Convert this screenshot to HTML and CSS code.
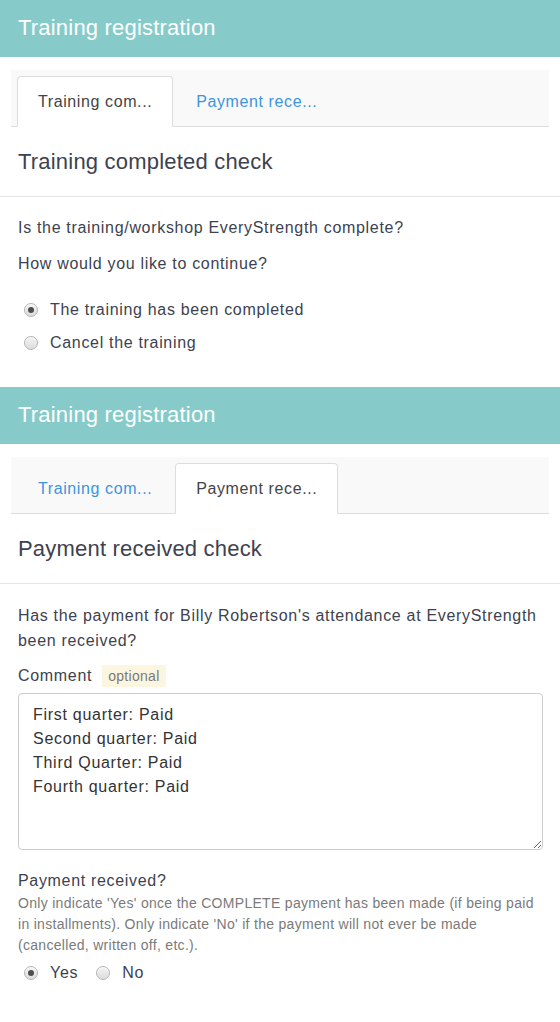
FILE: index.html
```html
<!DOCTYPE html>
<html>
<head>
<meta charset="utf-8">
<link rel="stylesheet" href="styles.css">
</head>
<body>
<section class="panel">
  <header class="bar"><h1 class="bar-title">Training registration</h1></header>
  <nav class="tabs">
    <span class="tab active">Training com...</span>
    <span class="tab link">Payment rece...</span>
  </nav>
  <h2 class="check-title">Training completed check</h2>
  <div class="body">
    <p class="q">Is the training/workshop EveryStrength complete?</p>
    <p class="q q2">How would you like to continue?</p>
    <div class="options">
      <label class="opt"><input type="radio" name="a" checked><span>The training has been completed</span></label>
      <label class="opt"><input type="radio" name="a"><span>Cancel the training</span></label>
    </div>
  </div>
</section>
<section class="panel second">
  <header class="bar"><h1 class="bar-title">Training registration</h1></header>
  <nav class="tabs">
    <span class="tab link">Training com...</span>
    <span class="tab active">Payment rece...</span>
  </nav>
  <h2 class="check-title">Payment received check</h2>
  <div class="body">
    <p class="q long">Has the payment for Billy Robertson's attendance at EveryStrength been received?</p>
    <div class="field-label">Comment <span class="badge">optional</span></div>
    <textarea class="comment">First quarter: Paid
Second quarter: Paid
Third Quarter: Paid
Fourth quarter: Paid</textarea>
    <div class="field-label pr">Payment received?</div>
    <p class="help">Only indicate 'Yes' once the COMPLETE payment has been made (if being paid in installments). Only indicate 'No' if the payment will not ever be made (cancelled, written off, etc.).</p>
    <div class="inline-opts">
      <label class="opt"><input type="radio" name="b" checked><span>Yes</span></label>
      <label class="opt"><input type="radio" name="b"><span>No</span></label>
    </div>
  </div>
</section>
</body>
</html>
```

FILE: styles.css
```css
* { box-sizing: border-box; }
html, body { margin: 0; padding: 0; background: #fff; }
body {
  font-family: "Liberation Sans", Arial, sans-serif;
  color: #3d4250;
  font-size: 16px;
  letter-spacing: 0.68px;
  width: 560px;
}
.panel { padding-bottom: 32px; }
.panel.second { padding-bottom: 0; }
.bar {
  background: #86cbca;
  height: 57px;
  display: flex;
  align-items: center;
  padding: 0 18px;
}
.bar-title {
  margin: 0;
  color: #fff;
  font-weight: normal;
  font-size: 22px;
  letter-spacing: 0.2px;
  line-height: 28px;
  position: relative;
  top: -1px;
}
.tabs {
  margin: 13px 11px 0;
  background: #f9f9f9;
  padding: 6px 6px 0;
  border-bottom: 1px solid #dddddd;
  display: flex;
  height: 57px;
}
.tab {
  display: block;
  padding: 0 20px;
  height: 51px;
  line-height: 50px;
  font-size: 16px;
  letter-spacing: 0.6px;
  border: 1px solid transparent;
  border-radius: 4px 4px 0 0;
  margin-right: 2px;
  margin-bottom: -1px;
}
.tab.active {
  background: #fff;
  border-color: #dddddd;
  border-bottom-color: #fff;
  color: #444;
}
.tab.link { color: #3c95de; }
.check-title {
  margin: 0;
  font-weight: normal;
  font-size: 22px;
  letter-spacing: 0.2px;
  line-height: 30px;
  padding: 20px 18px 19px;
  color: #3d4250;
  border-bottom: 1px solid #e5e5e5;
}
.body { padding: 0 18px; }
.q { margin: 19px 0 0; line-height: 24px; }
.q2 { margin-top: 12px; }
.q.long { margin-top: 19px; line-height: 25px; }
.options {
  margin-top: 22px;
  display: flex;
  flex-direction: column;
  gap: 9px;
  padding-left: 6px;
}
.opt {
  display: flex;
  align-items: center;
  line-height: 24px;
  font-size: 16px;
}
.opt input {
  appearance: none;
  -webkit-appearance: none;
  width: 14px;
  height: 14px;
  margin: 0 12px 0 0;
  border-radius: 50%;
  border: 1px solid #b4b4b4;
  background: linear-gradient(#f4f4f4, #dcdcdc);
  box-shadow: inset 0 1px 1px rgba(255,255,255,0.8);
  position: relative;
}
.opt input:checked::after {
  content: "";
  position: absolute;
  left: 3px;
  top: 3px;
  width: 6px;
  height: 6px;
  border-radius: 50%;
  background: #4d4d4d;
}
.field-label {
  margin-top: 11px;
  line-height: 24px;
  display: flex;
  align-items: center;
}
.badge {
  display: inline-block;
  margin-left: 10px;
  background: #fcf6e0;
  color: #7a7a7a;
  font-size: 14px;
  letter-spacing: 0.3px;
  line-height: 22px;
  padding: 0 6px;
}
.comment {
  display: block;
  width: 525px;
  height: 157px;
  margin-top: 5px;
  border: 1px solid #cccccc;
  border-radius: 4px;
  padding: 9px 14px;
  font-family: "Liberation Sans", Arial, sans-serif;
  font-size: 16px;
  letter-spacing: 0.72px;
  line-height: 24px;
  color: #333;
  resize: vertical;
}
.field-label.pr { margin-top: 19px; }
.help {
  margin: 0;
  font-size: 14px;
  letter-spacing: 0.3px;
  line-height: 21px;
  color: #7a7a7a;
}
.inline-opts {
  display: flex;
  gap: 18px;
  padding-left: 6px;
  margin-top: 5px;
}
```
